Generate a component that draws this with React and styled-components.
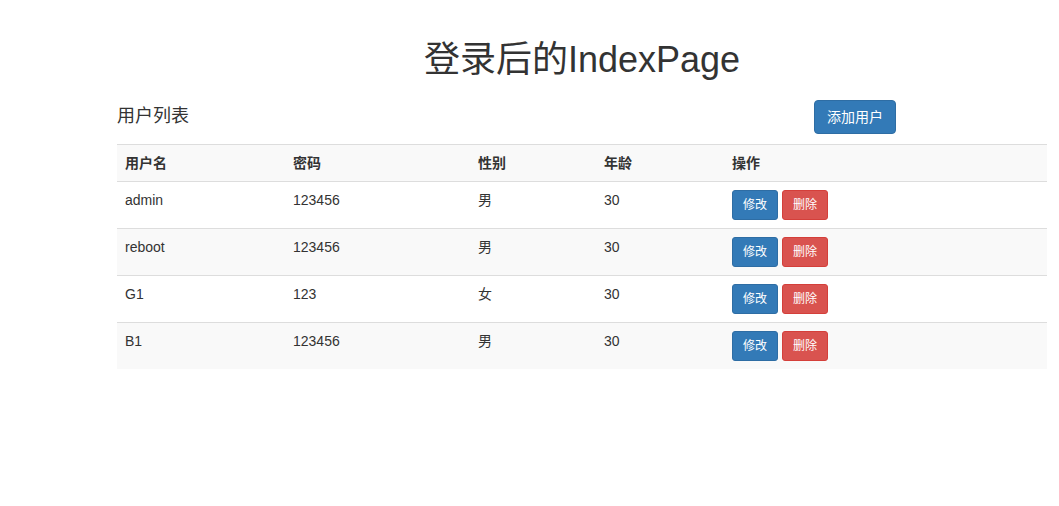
import styled, { createGlobalStyle } from 'styled-components';

const GlobalStyle = createGlobalStyle`
  body {
    margin: 0;
    background: #fff;
    color: #333;
    font-family: "Liberation Sans", "Noto Sans CJK SC", sans-serif;
    font-size: 14px;
    line-height: 20px;
  }
`;

const Page = styled.div`
  width: 930px;
  margin-left: 117px;
  padding-top: 40px;
`;

const Title = styled.h1`
  margin: 0;
  font-size: 36px;
  line-height: 40px;
  font-weight: 400;
  text-align: center;
  color: #333;
`;

const Toolbar = styled.div`
  display: flex;
  align-items: center;
  justify-content: space-between;
  width: 779px;
  margin-top: 20px;
  margin-bottom: 10px;
`;

const ListTitle = styled.h4`
  margin: 0;
  font-size: 18px;
  line-height: 22px;
  font-weight: 400;
  position: relative;
  top: -1px;
`;

const Button = styled.button`
  display: inline-block;
  font-family: "Liberation Sans", "Noto Sans CJK SC", sans-serif;
  font-size: ${(p) => (p.small ? '12px' : '14px')};
  line-height: ${(p) => (p.small ? '18px' : '20px')};
  padding: ${(p) => (p.small ? '5px 10px' : '6px 12px')};
  border-radius: ${(p) => (p.small ? '3px' : '4px')};
  border: 1px solid ${(p) => (p.danger ? '#d43f3a' : '#2e6da4')};
  background: ${(p) => (p.danger ? '#d9534f' : '#337ab7')};
  color: #fff;
  cursor: pointer;
  vertical-align: top;

  & + & {
    margin-left: 4px;
  }
`;

const Table = styled.table`
  width: 100%;
  border-collapse: collapse;
  border-spacing: 0;
  table-layout: fixed;

  tr:nth-child(odd) {
    background: #f9f9f9;
  }

  th,
  td {
    padding: 8px;
    text-align: left;
    vertical-align: top;
    border-top: 1px solid #ddd;
    line-height: 20px;
  }

  th {
    font-weight: bold;
  }
`;

const users = [
  { name: 'admin', password: '123456', sex: '男', age: 30 },
  { name: 'reboot', password: '123456', sex: '男', age: 30 },
  { name: 'G1', password: '123', sex: '女', age: 30 },
  { name: 'B1', password: '123456', sex: '男', age: 30 },
];

export default function App() {
  return (
    <>
      <GlobalStyle />
      <Page>
        <Title>登录后的IndexPage</Title>
        <Toolbar>
          <ListTitle>用户列表</ListTitle>
          <Button type="button">添加用户</Button>
        </Toolbar>
        <Table>
          <tbody>
            <tr>
              <th style={{ width: 152 }}>用户名</th>
              <th style={{ width: 169 }}>密码</th>
              <th style={{ width: 110 }}>性别</th>
              <th style={{ width: 112 }}>年龄</th>
              <th>操作</th>
            </tr>
            {users.map((u) => (
              <tr key={u.name}>
                <td>{u.name}</td>
                <td>{u.password}</td>
                <td>{u.sex}</td>
                <td>{u.age}</td>
                <td>
                  <Button type="button" small>修改</Button>
                  <Button type="button" small danger>删除</Button>
                </td>
              </tr>
            ))}
          </tbody>
        </Table>
      </Page>
    </>
  );
}
